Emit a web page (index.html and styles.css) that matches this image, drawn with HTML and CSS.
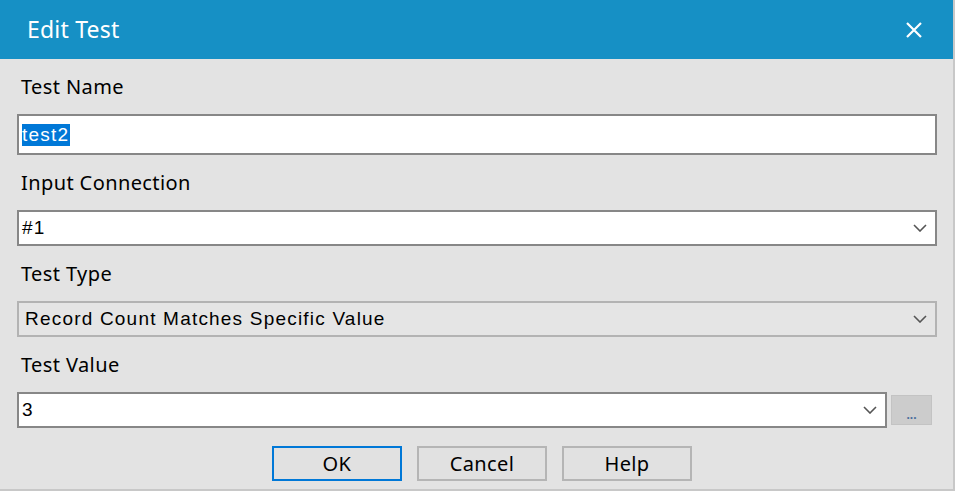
FILE: index.html
```html
<!DOCTYPE html>
<html>
<head>
<meta charset="utf-8">
<link rel="stylesheet" href="styles.css">
</head>
<body>
<div class="window">
  <div class="titlebar">
    <span class="title">Edit Test</span>
    <svg class="close" width="18" height="16" viewBox="0 0 18 16"><path d="M2 1 L16 15 M16 1 L2 15" stroke="#fff" stroke-width="2.2" fill="none"/></svg>
  </div>
  <div class="content">
    <div class="label first">Test Name</div>
    <div class="field textbox"><span class="sel">test2</span></div>

    <div class="label">Input Connection</div>
    <div class="field combo"><span class="val">#1</span><svg class="chev" width="14" height="8" viewBox="0 0 14 8"><path d="M1 1 L7 7 L13 1" stroke="#555" stroke-width="1.6" fill="none"/></svg></div>

    <div class="label">Test Type</div>
    <div class="field combo disabled"><span class="val">Record Count Matches Specific Value</span><svg class="chev" width="14" height="8" viewBox="0 0 14 8"><path d="M1 1 L7 7 L13 1" stroke="#555" stroke-width="1.6" fill="none"/></svg></div>

    <div class="label">Test Value</div>
    <div class="row">
      <div class="field combo grow"><span class="val">3</span><svg class="chev" width="14" height="8" viewBox="0 0 14 8"><path d="M1 1 L7 7 L13 1" stroke="#555" stroke-width="1.6" fill="none"/></svg></div>
      <div class="dots">...</div>
    </div>

    <div class="buttons">
      <div class="btn default">OK</div>
      <div class="btn">Cancel</div>
      <div class="btn">Help</div>
    </div>
  </div>
</div>
</body>
</html>
```

FILE: styles.css
```css
html, body {
  margin: 0;
  padding: 0;
  background: #ffffff;
}
.window {
  width: 953px;
  height: 489px;
  background: #e3e3e3;
  border-right: 2px solid #c8c8c8;
  border-bottom: 2px solid #c8c8c8;
  font-family: "Noto Sans", "Open Sans", sans-serif;
  color: #000;
  overflow: hidden;
}
.titlebar {
  height: 59px;
  background: #1690c5;
  display: flex;
  align-items: center;
  justify-content: space-between;
  padding: 0 30px 0 27px;
}
.title {
  color: #ffffff;
  font-size: 23px;
  letter-spacing: 0.2px;
  margin-top: -2px;
}
.close {
  display: block;
}
.content {
  padding: 0 16px 0 17px;
}
.label {
  font-size: 20px;
  letter-spacing: 0.4px;
  line-height: 26px;
  padding: 15px 0 14px 4px;
}
.field {
  box-sizing: border-box;
  border: 2px solid #878787;
  background: #ffffff;
  display: flex;
  align-items: center;
  font-family: "Liberation Sans", sans-serif;
  font-size: 19px;
  letter-spacing: 1.2px;
}
.textbox {
  height: 41px;
  padding-left: 3px;
}
.sel {
  background: #0078d7;
  color: #ffffff;
  line-height: 22px;
  padding-right: 1px;
}
.combo {
  height: 36px;
  padding: 0 8px 0 3px;
  justify-content: space-between;
}
.combo.disabled {
  background: #e5e5e5;
  border-color: #b3b3b3;
  padding-left: 6px;
}
.chev {
  display: block;
}
.row {
  display: flex;
  align-items: center;
  gap: 4px;
}
.grow {
  flex: 1;
}
.dots {
  width: 41px;
  height: 30px;
  box-sizing: border-box;
  background: #cccccc;
  border: 1px solid #c3c3c3;
  font-size: 12px;
  font-weight: bold;
  color: #4a6d9c;
  display: flex;
  justify-content: center;
  align-items: flex-end;
  line-height: 18px;
  margin-right: 5px;
}
.buttons {
  display: flex;
  justify-content: center;
  gap: 15px;
  padding-left: 10px;
  margin-top: 18px;
}
.btn {
  box-sizing: border-box;
  width: 130px;
  height: 35px;
  border: 2px solid #b5b5b5;
  background: #e1e1e1;
  font-size: 20px;
  letter-spacing: 0.4px;
  display: flex;
  align-items: center;
  justify-content: center;
}
.btn.default {
  border-color: #0078d7;
}
```
